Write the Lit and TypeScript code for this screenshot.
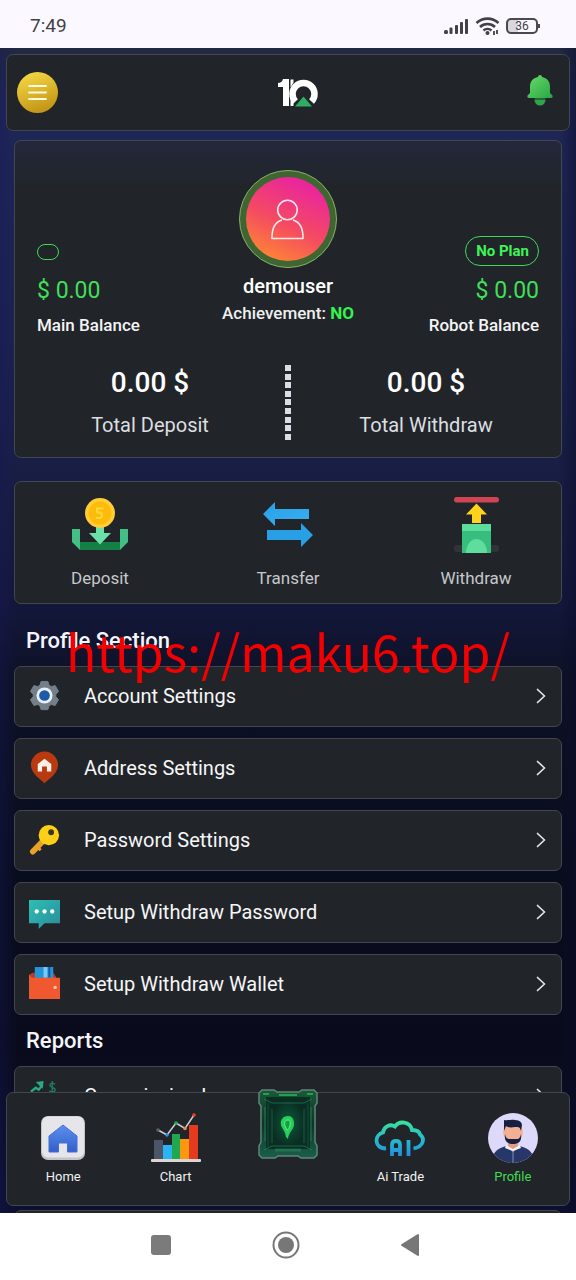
import { LitElement, html, css, svg, nothing } from "lit";
import { customElement, property } from "lit/decorators.js";

const icons: Record<string, unknown> = {
  account: svg`
    <path d="M12.500 1.500h7l1.200 4 2.300 1.300 4-1 3.500 6-2.800 3v2.500l2.800 3-3.500 6-4-1-2.300 1.300-1.200 4h-7l-1.200-4-2.300-1.300-4 1-3.500-6 2.800-3v-2.500l-2.800-3 3.500-6 4 1 2.300-1.300z" fill="#747f89" stroke="#747f89" stroke-width="1" stroke-linejoin="round"/>
    <circle cx="16" cy="16" r="8.300" fill="#e6f0fb"/><circle cx="16" cy="16" r="5.500" fill="#1d5ba8"/>`,
  address: svg`
    <path d="M16 32.500C13.500 29 2 23 2 13.500a14 14 0 0 1 28 0c0 9.500-11.500 15.500-14 19z" fill="#b93a10"/>
    <path d="M16 7l7 5.500V20h-4.500v-5h-5v5H9v-7.500z" fill="#fff1e8"/>`,
  password: svg`
    <path d="M4 28.500L16 16" stroke="#e9a227" stroke-width="6" stroke-linecap="round"/>
    <path d="M9 24l3 3" stroke="#e9a227" stroke-width="3"/>
    <circle cx="20.500" cy="11.500" r="10.500" fill="#fdd017"/><circle cx="22.800" cy="8.500" r="3" fill="#3a3620"/>`,
  chat: svg`
    <defs><linearGradient id="chat" x1="0" y1="0" x2="1" y2="1"><stop stop-color="#2ebfb5"/><stop offset="1" stop-color="#2a8b99"/></linearGradient></defs>
    <path d="M0 4h32v24H16l-6 6v-6H0z" fill="url(#chat)"/>
    <circle cx="8" cy="16" r="2.200" fill="#fff"/><circle cx="16" cy="16" r="2.200" fill="#fff"/><circle cx="24" cy="16" r="2.200" fill="#fff"/>`,
  wallet: svg`
    <path d="M0 7l4-2h21l3 4v3H0z" fill="#b93b28"/>
    <rect x="6" y="-1" width="19" height="13" fill="#2695d8"/><rect x="15" y="-1" width="4" height="11" fill="#7cc9f5"/><rect x="20" y="-1" width="2" height="11" fill="#175a9b"/>
    <path d="M0 7l3 3h29v22H0z" fill="#f0582f"/><circle cx="27" cy="20" r="1.800" fill="#ffc4a8"/>`,
  commission: svg`
    <path d="M2 12l5-4 3 2 4-5" fill="none" stroke="#28a987" stroke-width="2.500"/><path d="M7 2l8-1-1 8z" fill="#28a987"/>
    <path d="M27 4.500c-1.500-2-5.500-1.500-5.500 1s5.500 2 5.500 4.500-4 3-6 1M24 1v14" fill="none" stroke="#1f7a58" stroke-width="1.500"/>`,
  deposit: svg`
    <path d="M8 45h40v8H8z" fill="#148046"/><path d="M0 32h8v21l-8-8z" fill="#43bf86"/><path d="M56 32h-8v21l8-8z" fill="#43bf86"/>
    <path d="M24 26h8v10h7L28 47.500 17 36h7z" fill="#6be0a8"/>
    <circle cx="28" cy="16" r="15" fill="#ffcd38"/><circle cx="28" cy="16" r="11.500" fill="#fdbb0b"/>
    <path d="M31.500 11.500h-6.500v4h3a2.900 2.900 0 0 1 0 5.500h-4" fill="none" stroke="#ffd93a" stroke-width="2"/>`,
  transfer: svg`
    <defs><linearGradient id="transfer" x1="0" y1="0" x2="1" y2="1"><stop stop-color="#2a9fe8"/><stop offset="1" stop-color="#38b0ef"/></linearGradient></defs>
    <path d="M3 17L15 5v7h34v10H15v7z" fill="url(#transfer)"/><path d="M53 38L41 26v7H7v10h34v7z" fill="#299fe6"/>`,
  withdraw: svg`
    <rect x="6" y="0" width="45" height="5.500" rx="2.700" fill="#cf4553"/>
    <path d="M28.500 6.500L39 17.500h-6V26h-9v-8.500h-6z" fill="#ffd21c"/>
    <rect x="6" y="48" width="45" height="7" rx="3" fill="#303438"/>
    <rect x="14" y="27" width="29" height="29" fill="#37bd7d"/><rect x="14" y="27" width="29" height="7" fill="#5ddd9c"/>
    <path d="M18 56a10.500 14 0 0 1 21 0z" fill="#60dc9c"/>`,
  home: svg`
    <defs><linearGradient id="home" x1="0" y1="0" x2="0" y2="1"><stop stop-color="#5b90ee"/><stop offset="1" stop-color="#335fc9"/></linearGradient></defs>
    <rect x="3" y="3" width="44" height="44" rx="7" fill="#c3c4c8"/><rect x="4" y="3.500" width="42" height="41" rx="6" fill="#e6e6ea"/>
    <path d="M25 12l14 11v16H29.500v-9h-9v9H11V23z" fill="url(#home)" stroke="#426fd4" stroke-linejoin="round"/>`,
  chart: svg`
    <rect x="3" y="27" width="9" height="20" fill="#4d5666"/><rect x="12" y="32" width="9" height="15" fill="#28b5f2"/>
    <rect x="21" y="21" width="8" height="26" fill="#1fa84f"/><rect x="29" y="26" width="9" height="21" fill="#fb9812"/><rect x="38" y="12" width="9" height="35" fill="#e63a1f"/>
    <rect x="0" y="46" width="50" height="3" rx="1" fill="#ddd5d5"/>
    <path d="M7 17l9 5 9-12 9 5.500L43 2" fill="none" stroke="#ccd0d5" stroke-width="1.500"/>
    <circle cx="7" cy="17" r="1.800" fill="#596273"/><circle cx="16" cy="22" r="1.800" fill="#2993eb"/><circle cx="25" cy="10" r="1.800" fill="#26ad57"/><circle cx="34" cy="15.500" r="1.800" fill="#e58a52"/><circle cx="43" cy="2" r="1.800" fill="#ee402a"/>`,
  trade: svg`
    <defs><linearGradient id="trade" gradientUnits="userSpaceOnUse" x1="0" y1="7" x2="0" y2="44"><stop stop-color="#3de295"/><stop offset=".45" stop-color="#26c2c8"/><stop offset="1" stop-color="#238be0"/></linearGradient></defs>
    <g fill="none" stroke="url(#trade)" stroke-width="3.800">
      <path d="M11 35.500C4 35.500 1.500 31 1.500 27.500c0-4 3-7 6.500-8 1-6 7-9 12-6 4-6 15-5.500 17 3.500 6 0 7.500 2 8 4.500 5 4 4 12-6.500 14"/>
      <path d="M17 43V32q0-4 4-4t4 4v11M17 37h8M33.500 27v16"/>
    </g>`,
  profile: svg`
    <defs><clipPath id="face"><circle cx="25" cy="25" r="25"/></clipPath></defs>
    <g clip-path="url(#face)"><rect width="50" height="50" fill="#dcd9fa"/>
      <path d="M4 50c0-10 4-14 14-17h14c10 3 14 7 14 17z" fill="#28376a"/>
      <path d="M20 29h10v6l-5 4-5-4z" fill="#e59a80"/><path d="M18 32l7 4 7-4 1 3-8 3-8-3z" fill="#f4f4fb"/><path d="M25 38v12" stroke="#8290ae"/>
      <ellipse cx="25" cy="19" rx="10" ry="9.500" fill="#f4b095"/>
      <path d="M17 21c1 6 4 5 8 5s7 1 8-5c1 7-2 10-8 10s-9-3-8-10z" fill="#17203f"/>
      <path d="M16 18V7c4 1 6-1 11 0 5 0 7 3 7 5l-1 6c-1-4-2-4-6-4-5 1-8 0-9-1z" fill="#17203f"/></g>`,
};

const icon = (name: string, size: number, box: number) =>
  html`<svg width=${size} height=${size} viewBox="0 0 ${box} ${box}" aria-hidden="true">${icons[name]}</svg>`;

const panel = css`
  .panel { background: #212529; border: 1px solid #42464f; border-radius: 7px; }
`;
const reset = css`
  *, *::before, *::after { box-sizing: border-box; }
  button { font: inherit; color: inherit; background: none; border: 0; padding: 0; margin: 0; cursor: pointer; }
  a { color: inherit; text-decoration: none; }
  svg { display: block; flex: none; overflow: visible; }
`;

@customElement("status-bar")
class StatusBar extends LitElement {
  static styles = [reset, css`
    :host { display: flex; align-items: center; justify-content: space-between; height: 48px; padding: 4px 38px 0 30px; background: #fbf9ff; color: #424147; flex: none; }
    .time { font-size: 19px; line-height: 24px; }
    .signals { display: flex; align-items: center; gap: 7px; }
    .battery { display: flex; align-items: center; justify-content: center; width: 32px; height: 16px; border: 2px solid #4a494f; border-radius: 5px; font-size: 12px; line-height: 12px; position: relative; background: linear-gradient(90deg, #d8d7de 36%, #fbf9ff 36%); }
    .battery::after { content: ""; position: absolute; right: -4px; top: 4px; width: 2px; height: 4px; background: #4a494f; }
  `];
  render() {
    return html`
      <span class="time">7:49</span>
      <div class="signals">
        <svg width="25" height="16" viewBox="0 0 25 16" fill="#424147" aria-hidden="true">
          <rect x="0" y="12" width="4" height="4" rx="1.500"/><rect x="5.500" y="9.500" width="3" height="6.500" rx="1"/><rect x="11" y="7" width="3" height="9" rx="1"/><rect x="16" y="4" width="3" height="12" rx="1"/><rect x="21" y="1" width="3" height="15" rx="1"/>
        </svg>
        <svg width="23" height="18" viewBox="0 0 23 18" fill="none" stroke="#424147" stroke-width="2.600" aria-hidden="true">
          <path d="M0.500 6a16 16 0 0 1 22 0M4 10a11 11 0 0 1 15 0M7.500 13.500a6 6 0 0 1 8 0"/><circle cx="11.500" cy="16" r="2" fill="#424147" stroke="none"/>
          <path d="M18 14v4M21 13v4" stroke-width="1.800"/>
        </svg>
        <span class="battery">36</span>
      </div>`;
  }
}

@customElement("top-bar")
class TopBar extends LitElement {
  static styles = [reset, panel, css`
    :host { display: block; padding: 6px 6px 0; }
    .bar { display: flex; align-items: center; justify-content: space-between; height: 77px; padding: 0 16px 0 10px; }
    .menu { display: grid; place-items: center; width: 41px; height: 41px; margin-right: 11px; border-radius: 50%; background: linear-gradient(160deg, #f2d544 10%, #d7b027 55%, #b98a10); }
    .bell { padding-bottom: 5px; }
  `];
  render() {
    return html`<header class="bar panel">
      <button class="menu" aria-label="Menu">
        <svg width="19" height="15" viewBox="0 0 19 15" stroke="#fffbe0" stroke-width="1.800" stroke-linecap="round"><path d="M1 1h17M1 7.500h17M1 14h17"/></svg>
      </button>
      <svg width="40" height="30" viewBox="0 0 40 30" role="img" aria-label="10">
        <path d="M5 1h6v27H5V9H0V5q4 0 5-4z" fill="#fff"/>
        <path d="M12.500 1.500h3v3l-3 5zM12.500 20l3 4v4h-3z" fill="#fff"/>
        <path d="M18.500 24.500A11 11 0 1 1 34.500 24.500" fill="none" stroke="#fff" stroke-width="6.500" transform="translate(-1 -1)"/>
        <path d="M25.500 16.500l11 13h-22z" fill="#212529"/><path d="M25.500 18.500l8.500 10H17z" fill="#2dae62"/>
      </svg>
      <button class="bell" aria-label="Notifications">
        <svg width="26" height="31" viewBox="0 0 26 31"><defs><linearGradient id="bell" x1="0" y1="0" x2="1" y2="1"><stop stop-color="#6adc6a"/><stop offset="1" stop-color="#27a544"/></linearGradient></defs>
          <circle cx="13" cy="25" r="5.500" fill="#2da64a"/><path d="M.5 24h25" stroke="#212529"/><path d="M11 2a2 2 0 0 1 4 0c5 1 8 4 8 10v6l2.500 2.500q.5 2.500-1.500 2.500H2q-2 0-1.500-2.500L3 18v-6c0-6 3-9 8-10z" fill="url(#bell)"/></svg>
      </button>
    </header>`;
  }
}

@customElement("balance-card")
class BalanceCard extends LitElement {
  static styles = [reset, panel, css`
    :host { display: block; }
    .card { padding: 29px 0 17px; background: linear-gradient(#23273b, #212529 48px); }
    .summary { display: grid; grid-template-columns: 1fr auto 1fr; padding: 0 22px; }
    .side { display: flex; flex-direction: column; justify-content: flex-end; align-items: flex-start; font-size: 17px; font-weight: 500; line-height: 24px; color: #f4f4f5; }
    .right { align-items: flex-end; }
    .slot { display: flex; align-items: center; height: 28px; }
    .pill { border: 1px solid #3cdb55; border-radius: 16px; padding: 7px 10px; }
    .plan { padding: 1px 9px 1px 10px; color: #3df558; font-size: 15px; font-weight: 700; line-height: 26px; }
    .money { margin: 10px 0 7px; color: #3fdf58; font-size: 23px; line-height: 30px; font-weight: 400; }
    .person { display: flex; flex-direction: column; align-items: center; padding-bottom: 12px; color: #fff; font-weight: 500; }
    .avatar { display: grid; place-items: center; width: 98px; height: 98px; border-radius: 50%; border: 1px solid #86b36c; background: #3f6631; }
    .disc { display: grid; place-items: center; width: 84px; height: 84px; border-radius: 50%; background: linear-gradient(25deg, #ff8435 10%, #f44a62 45%, #e9269c 85%); }
    .name { margin: 6px 0 3px; font-size: 20px; line-height: 24px; }
    .achievement { font-size: 17px; line-height: 24px; color: #eef0f0; }
    .yes { color: #35f44f; font-weight: 700; }
    .totals { display: grid; grid-template-columns: 1fr 6px 1fr; margin-top: 28px; text-align: center; }
    .total { display: flex; flex-direction: column; gap: 12px; padding: 0 0 3px; font-size: 20px; line-height: 24px; color: #dcdee0; }
    .total strong { font-size: 28px; line-height: 36px; font-weight: 500; color: #fff; }
    .rule { height: 75px; background: repeating-linear-gradient(#d9dde6 0 8%, transparent 8% 11.500%); }
  `];
  render() {
    return html`<section class="card panel">
      <div class="summary">
        <div class="side">
          <span class="slot"><span class="pill"></span></span>
          <span class="money">$ 0.00</span><span>Main Balance</span>
        </div>
        <div class="person">
          <div class="avatar"><div class="disc">
            <svg width="33" height="41" viewBox="0 0 33 41" fill="none" stroke="#ffe9ee" stroke-width="1.600"><circle cx="16.500" cy="11" r="9.800"/><path d="M11 21C4 23 .8 29 1 39.500h31C32.200 29 29 23 22 21" stroke-linejoin="round"/></svg>
          </div></div>
          <div class="name">demouser</div>
          <div class="achievement">Achievement: <span class="yes">NO</span></div>
        </div>
        <div class="side right">
          <span class="pill plan">No Plan</span>
          <span class="money">$ 0.00</span><span>Robot Balance</span>
        </div>
      </div>
      <div class="totals">
        <div class="total"><strong>0.00 $</strong><span>Total Deposit</span></div>
        <div class="rule"></div>
        <div class="total"><strong>0.00 $</strong><span>Total Withdraw</span></div>
      </div>
    </section>`;
  }
}

@customElement("quick-actions")
class QuickActions extends LitElement {
  static styles = [reset, panel, css`
    :host { display: block; }
    .row { display: flex; justify-content: space-between; padding: 15px 42px 13px; }
    .action { display: flex; flex-direction: column; align-items: center; gap: 13px; width: 86px; font-size: 17px; line-height: 24px; color: #c6c8cb; }
  `];
  render() {
    return html`<nav class="row panel">
      ${["Deposit", "Transfer", "Withdraw"].map((n) => html`<a class="action" href="#">${icon(n.toLowerCase(), 56, 56)}<span>${n}</span></a>`)}
    </nav>`;
  }
}

@customElement("settings-row")
class SettingsRow extends LitElement {
  @property() icon = "";
  @property() label = "";
  static styles = [reset, panel, css`
    :host { display: block; }
    .row { display: flex; align-items: center; width: 100%; height: 61px; padding: 0 15px 2px 14px; gap: 24px; color: #f6f6f7; font-size: 20px; line-height: 24px; text-align: left; }
    .label { flex: 1; }
  `];
  render() {
    return html`<button class="row panel">
      ${icon(this.icon, 31, 32)}
      <span class="label">${this.label}</span>
      <svg width="10" height="16" viewBox="0 0 10 16" fill="none" stroke="#e6e7ea" stroke-width="1.700" stroke-linecap="round" stroke-linejoin="round"><path d="M1.500 1.500L8.500 8l-7 6.500"/></svg>
    </button>`;
  }
}

@customElement("tab-bar")
class TabBar extends LitElement {
  static styles = [reset, panel, css`
    :host { display: block; }
    .tabs { display: grid; grid-template-columns: repeat(5, 1fr); padding: 20px 0 19px; justify-items: center; }
    .tab { display: flex; flex-direction: column; align-items: center; gap: 5px; font-size: 13px; line-height: 18px; color: #f2f2f3; }
    .active { color: #3fdc50; }
    .gem { height: 70px; margin-top: -24px; }
  `];
  private tabs = [["home", "Home"], ["chart", "Chart"], ["", ""], ["trade", "Ai Trade"], ["profile", "Profile"]];
  render() {
    return html`<nav class="tabs panel">
      ${this.tabs.map(([name, label]) => name
        ? html`<a class="tab ${name === "profile" ? "active" : ""}" href="#" aria-current=${name === "profile" ? "page" : nothing}>${icon(name, 50, 50)}<span>${label}</span></a>`
        : html`<button class="gem" aria-label="Robot">
            <svg width="60" height="70" viewBox="0 0 60 70">
              <defs>
                <radialGradient id="glow"><stop stop-color="#128045"/><stop offset=".35" stop-color="#0b4a32"/><stop offset="1" stop-color="#0a2c22"/></radialGradient>
                <linearGradient id="edge" x1="0" y1="0" x2="0" y2="1"><stop stop-color="#1b5a3a"/><stop offset=".5" stop-color="#0e3426"/><stop offset="1" stop-color="#1a5f4b"/></linearGradient>
              </defs>
              <path d="M4 1h12l3 2h22l3-2h12l3 3v10l-2 3v36l2 4v9l-3 3H43l-3-2H20l-3 2H4l-3-3v-9l2-4V17l-2-3V4z" fill="url(#edge)" stroke="#5e8778" stroke-width="1.500"/>
              <path d="M8 8h44v52H8z" fill="#0a2f24"/>
              <path d="M13 10h34v48H13z" fill="url(#glow)"/>
              <g fill="none" stroke="#2a8d62">
                <path d="M7 18v34M53 18v34" opacity=".8"/><path d="M14 20v34M46 20v34" opacity=".5"/><path d="M10 14v44M50 14v44" opacity=".35"/>
                <path d="M6 10l8 4h32l8-4M6 61l8-4h32l8 4" opacity=".6"/><path d="M17 61h26" opacity=".5" stroke-width="3"/>
              </g>
              <path d="M21 6h18M5 5h6M49 5h6" stroke="#24b957" stroke-width="1.500"/>
              <path d="M30 27c-5 0-8 4-7 9 1 4 4 5 5 12l2 2c1-8 6-9 6-15 0-5-2-8-6-8z" fill="#28cf5b"/>
              <path d="M30 31c-3 0-4 3-3 6l2 4c3-1 5-10 1-10z" fill="#12a045" stroke="#68f08a"/>
            </svg></button>`)}
    </nav>`;
  }
}

@customElement("system-keys")
class SystemKeys extends LitElement {
  static styles = [reset, css`
    :host { display: flex; align-items: center; justify-content: center; gap: 97px; height: 67px; padding: 0 4px 4px 0; background: #fff; flex: none; }
  `];
  render() {
    return html`
      <button aria-label="Recent apps"><svg width="28" height="28" viewBox="0 0 28 28"><rect x="4" y="4" width="20" height="20" rx="3" fill="#7b7b7b"/></svg></button>
      <button aria-label="Home screen"><svg width="28" height="28" viewBox="0 0 28 28"><circle cx="14" cy="14" r="12.500" fill="none" stroke="#777" stroke-width="2"/><circle cx="14" cy="14" r="8" fill="#777"/></svg></button>
      <button aria-label="Back"><svg width="28" height="28" viewBox="0 0 28 28"><path d="M5 14L21 4v20z" fill="#777" stroke="#777" stroke-width="2" stroke-linejoin="round"/></svg></button>`;
  }
}

@customElement("app-root")
class AppRoot extends LitElement {
  static styles = [reset, panel, css`
    :host { display: flex; flex-direction: column; height: 100vh; font-family: Roboto, "Liberation Sans", sans-serif; }
    .screen { position: relative; flex: 1; min-height: 0; overflow: hidden; background: linear-gradient(90deg, rgba(22, 24, 90, .35), transparent 3%, transparent 97%, rgba(10, 12, 40, .5)), linear-gradient(#212942, #1f2757 5%, #1c2250 25%, #171c40 40%, #13173a 48%, #0e1126 54%, #090c1d 72%, #090b1c 86%, #0c0f2e); }
    .page { padding: 9px 14px 0; }
    .actions { display: block; margin: 23px 0 11px; }
    .title { margin: 0; padding: 12px 12px 11px; font-size: 22px; line-height: 28px; font-weight: 500; color: #f4f5fa; }
    .list { display: flex; flex-direction: column; gap: 11px; }
    .pending { height: 61px; }
    .tabs { position: absolute; left: 6px; right: 6px; bottom: 7px; }
    .watermark { position: absolute; left: 0; right: 0; top: 562px; text-align: center; font-family: "Noto Sans CJK SC", sans-serif; font-size: 50px; line-height: 80px; color: #f40000; pointer-events: none; }
  `];
  private settings = [
    ["account", "Account Settings"], ["address", "Address Settings"], ["password", "Password Settings"],
    ["chat", "Setup Withdraw Password"], ["wallet", "Setup Withdraw Wallet"],
  ];
  render() {
    return html`
      <status-bar></status-bar>
      <main class="screen">
        <top-bar></top-bar>
        <div class="page">
          <balance-card></balance-card>
          <quick-actions class="actions"></quick-actions>
          <h2 class="title">Profile Section</h2>
          <div class="list">${this.settings.map(([i, l]) => html`<settings-row icon=${i} label=${l}></settings-row>`)}</div>
          <h2 class="title">Reports</h2>
          <div class="list">
            <settings-row icon="commission" label="Commission Logs"></settings-row>
            <div class="pending panel"></div>
            <div class="pending panel"></div>
          </div>
        </div>
        <tab-bar class="tabs"></tab-bar>
        <div class="watermark">https://maku6.top/</div>
      </main>
      <system-keys></system-keys>`;
  }
}
